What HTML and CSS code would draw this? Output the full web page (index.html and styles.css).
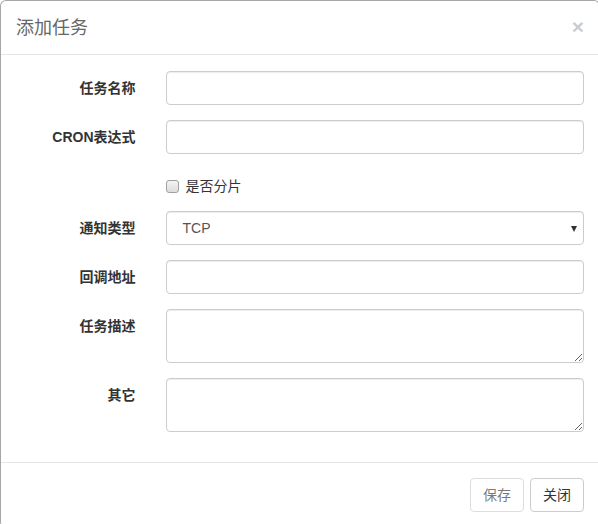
FILE: index.html
```html
<!DOCTYPE html>
<html lang="zh">
<head>
<meta charset="utf-8">
<title>添加任务</title>
<link rel="stylesheet" href="styles.css">
</head>
<body>
<div class="modal">
  <div class="modal-header">
    <h4 class="modal-title">添加任务</h4>
    <span class="close">×</span>
  </div>
  <div class="modal-body">
    <form class="form">
      <div class="form-group">
        <label class="control-label">任务名称</label>
        <div class="control"><input class="form-control" type="text"></div>
      </div>
      <div class="form-group">
        <label class="control-label">CRON表达式</label>
        <div class="control"><input class="form-control" type="text"></div>
      </div>
      <div class="form-group">
        <span></span>
        <div class="control checkbox"><label><span class="cb"></span>是否分片</label></div>
      </div>
      <div class="form-group">
        <label class="control-label">通知类型</label>
        <div class="control"><div class="select">TCP<span class="caret"></span></div></div>
      </div>
      <div class="form-group">
        <label class="control-label">回调地址</label>
        <div class="control"><input class="form-control" type="text"></div>
      </div>
      <div class="form-group">
        <label class="control-label">任务描述</label>
        <div class="control"><textarea class="form-control ta" rows="2"></textarea></div>
      </div>
      <div class="form-group">
        <label class="control-label">其它</label>
        <div class="control"><textarea class="form-control ta" rows="2"></textarea></div>
      </div>
    </form>
  </div>
  <div class="modal-footer">
    <button class="btn disabled" type="button">保存</button>
    <button class="btn" type="button">关闭</button>
  </div>
</div>
</body>
</html>
```
FILE: styles.css
```css
html, body {
  margin: 0;
  padding: 0;
  background: #fff;
}
body {
  font-family: "Liberation Sans", "Noto Sans CJK SC", sans-serif;
  font-size: 14px;
  line-height: 20px;
  color: #333;
  overflow: hidden;
}
* { box-sizing: border-box; }
.modal {
  width: 600px;
  border: 1px solid rgba(0,0,0,.35);
  border-radius: 6px;
  background: #fff;
}
.modal-header {
  display: flex;
  justify-content: space-between;
  align-items: center;
  padding: 15px;
  height: 54px;
  border-bottom: 1px solid #e5e5e5;
}
.modal-title {
  margin: 0;
  font-size: 18px;
  font-weight: 400;
  line-height: 24px;
  color: #666;
}
.close {
  font-size: 21px;
  font-weight: 700;
  color: #000;
  opacity: .2;
  line-height: 1;
  margin-right: 0;
  margin-top: -3px;
}
.modal-body {
  padding: 16px 0 15px;
}
.form {
  display: flex;
  flex-direction: column;
  gap: 15px;
}
.form-group {
  display: grid;
  grid-template-columns: 149.5px 1fr;
  margin-bottom: 0;
}
.form-group:last-child {
  margin-bottom: 15px;
}
.control-label {
  text-align: right;
  padding: 7px 15px 0 0;
  font-weight: 700;
}
.control {
  padding: 0 15px;
}
.form-control {
  display: block;
  width: 100%;
  height: 34px;
  padding: 6px 12px;
  font: inherit;
  color: #555;
  background: #fff;
  border: 1px solid #ccc;
  border-radius: 4px;
  box-shadow: inset 0 1px 1px rgba(0,0,0,.075);
  outline: none;
}
.ta {
  height: 54px;
  resize: vertical;
}
.checkbox {
  padding-top: 7px;
  min-height: 27px;
}
.checkbox label {
  display: flex;
  align-items: center;
  gap: 7px;
  font-weight: 400;
  line-height: 20px;
}
.cb {
  width: 13px;
  height: 13px;
  border: 1px solid #a0a0a0;
  border-radius: 3px;
  background: linear-gradient(#f4f4f4, #dcdcdc);
}
.select {
  position: relative;
  height: 34px;
  padding: 6px 16px;
  color: #555;
  border: 1px solid #ccc;
  border-radius: 4px;
  box-shadow: inset 0 1px 1px rgba(0,0,0,.075);
  background: #fff;
}
.caret {
  position: absolute;
  right: 6px;
  top: 14px;
  width: 0;
  height: 0;
  border-left: 3.5px solid transparent;
  border-right: 3.5px solid transparent;
  border-top: 6px solid #333;
}
.modal-footer {
  display: flex;
  justify-content: flex-end;
  gap: 6px;
  padding: 15px;
  border-top: 1px solid #e5e5e5;
}
.btn {
  height: 34px;
  padding: 6px 12px;
  font: inherit;
  color: #333;
  background: #fff;
  border: 1px solid #ccc;
  border-radius: 4px;
}
.btn.disabled {
  opacity: .65;
  color: #333;
}
```
